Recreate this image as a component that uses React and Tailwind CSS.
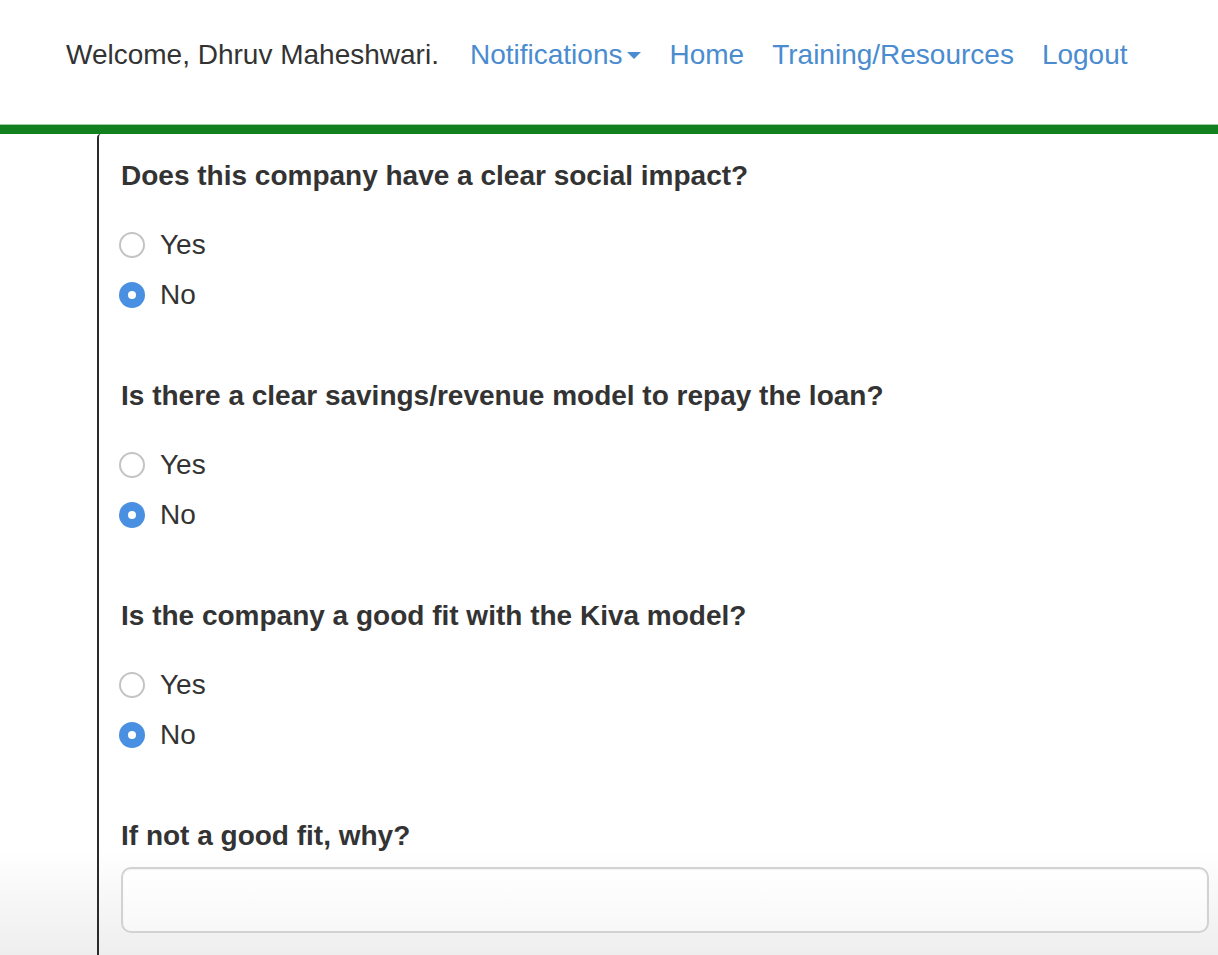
import React from 'react';

const questions = [
  { id: 'impact', label: 'Does this company have a clear social impact?' },
  { id: 'revenue', label: 'Is there a clear savings/revenue model to repay the loan?' },
  { id: 'fit', label: 'Is the company a good fit with the Kiva model?' },
];

function Radio({ checked, label }) {
  return (
    <label className="flex items-center h-[40px] -ml-[2px] cursor-pointer">
      {checked ? (
        <span className="w-[26px] h-[26px] rounded-full bg-[#4a90e2] flex items-center justify-center">
          <span className="w-[8px] h-[8px] rounded-full bg-white" />
        </span>
      ) : (
        <span className="w-[26px] h-[26px] rounded-full border-2 border-[#c4c4c4] bg-white" />
      )}
      <span className="ml-[15px]">{label}</span>
    </label>
  );
}

function Question({ label }) {
  return (
    <div className="mb-[61px]">
      <div className="font-bold leading-[40px] mb-[29px]">{label}</div>
      <div className="flex flex-col gap-[10px]">
        <Radio label="Yes" />
        <Radio label="No" checked />
      </div>
    </div>
  );
}

export default function App() {
  const navLinks = ['Home', 'Training/Resources', 'Logout'];

  return (
    <div
      className="h-[955px] overflow-hidden bg-linear-to-b from-white from-[89%] to-[#eeeeee] text-[#333333] text-[28px]"
      style={{ fontFamily: '"Liberation Sans", Arial, sans-serif' }}
    >
      <header className="h-[124px] flex items-start pt-[35px] pl-[66px]">
        <span className="leading-[40px]">Welcome, Dhruv Maheshwari.</span>
        <nav className="flex items-center ml-[17px] leading-[40px] text-[#4a8ccf]">
          <a href="#" className="px-[14px] flex items-center">
            Notifications
            <svg width="14" height="8" viewBox="0 0 14 8" className="ml-[5px] mt-[2px]">
              <path d="M0 0 L14 0 L7 7 Z" fill="#4a8ccf" />
            </svg>
          </a>
          {navLinks.map((item) => (
            <a key={item} href="#" className="px-[14px]">
              {item}
            </a>
          ))}
        </nav>
      </header>

      <div className="h-[10px] bg-[#12801f] border-t border-[#9ccba0]" />

      <main className="ml-[97px] border-l-2 border-[#2b2b2b] rounded-tl-[4px] pl-[22px] pt-[22px] h-full">
        {questions.map((q) => (
          <Question key={q.id} label={q.label} />
        ))}
        <div className="font-bold leading-[40px] mb-[11px]">If not a good fit, why?</div>
        <input
          type="text"
          className="block w-[1088px] h-[66px] rounded-[10px] border-2 border-[#d2d2d2] bg-linear-to-b from-white to-[#f8f8f8] shadow-[inset_0_1px_2px_rgba(0,0,0,0.06)] outline-none px-[20px]"
        />
      </main>
    </div>
  );
}
